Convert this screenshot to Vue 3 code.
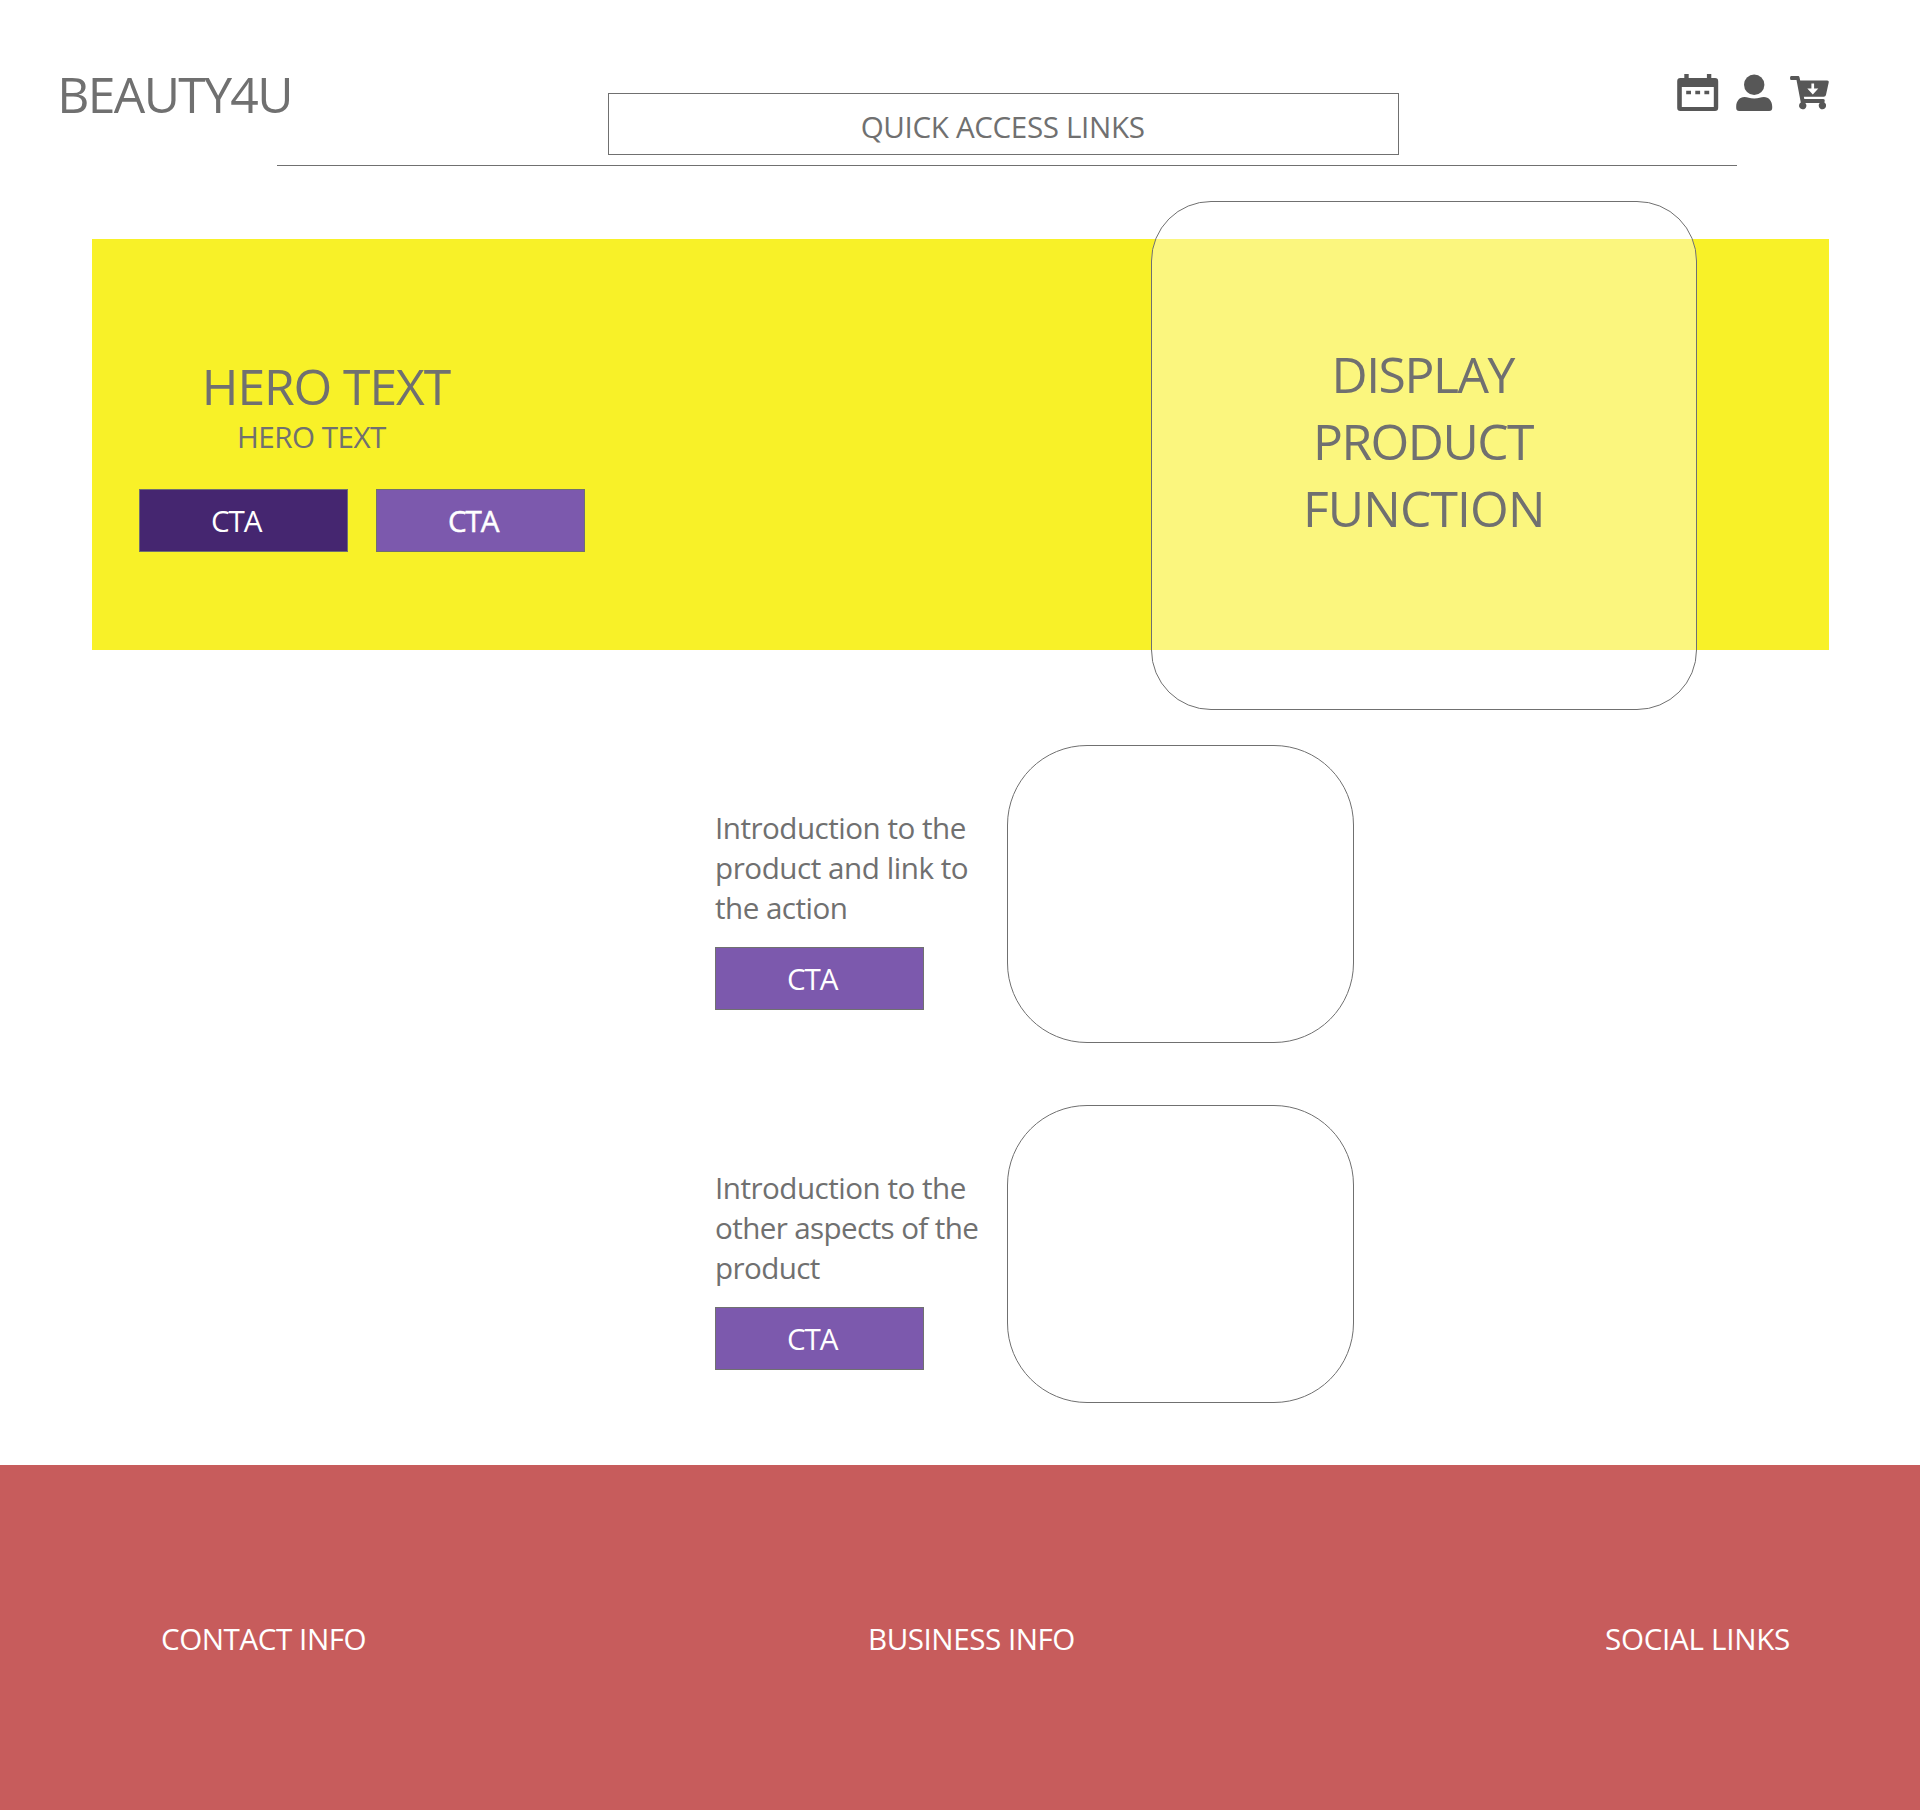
<script setup>
const features = [
  [
    { text: 'Introduction to the', tracking: -0.5 },
    { text: 'product and link to', tracking: -0.45 },
    { text: 'the action', tracking: -0.52 },
  ],
  [
    { text: 'Introduction to the', tracking: -0.5 },
    { text: 'other aspects of the', tracking: -0.61 },
    { text: 'product', tracking: -0.6 },
  ],
]
</script>

<template>
  <div class="page">
    <header class="header">
      <h1 class="brand">BEAUTY4U</h1>
      <nav class="quick">QUICK ACCESS LINKS</nav>
      <div class="icons">
        <svg width="42" height="38" viewBox="0 0 42 38" fill="#575757">
          <path d="M7.3 0h4.4v4h18.2V0h4.4v4H38a3.2 3.2 0 0 1 3.2 3.2V33.7A3.2 3.2 0 0 1 38 36.9H3.4A3.2 3.2 0 0 1 .2 33.7V7.2A3.2 3.2 0 0 1 3.4 4h3.9zM4.8 13v20h32V13z" fill-rule="evenodd" />
          <path d="M9.2 16.8H14v3.5H9.2zM18.3 16.8h4.8v3.5h-4.8zM27.4 16.8h4.8v3.5h-4.8z" />
        </svg>
        <svg class="user" width="37" height="38" viewBox="0 0 37 38" fill="#575757">
          <circle cx="18.2" cy="10.8" r="10.2" />
          <path d="M8.5 23.1c3 0 5.2 1.5 9.7 1.5s6.7-1.5 9.7-1.5c4.9 0 8.3 4.2 8.3 9.4v1.4a3 3 0 0 1-3 3H3.2a3 3 0 0 1-3-3v-1.4c0-5.2 3.4-9.4 8.3-9.4z" />
        </svg>
        <svg class="cart" width="40" height="38" viewBox="0 0 40 38" fill="#575757">
          <path d="M1.6 2h6.2c1 0 1.5.4 1.7 1.3l.7 3.3h27c1.2 0 1.8.9 1.5 2L36 20.8c-.3 1.3-1 2-2.3 2H13.8l.5 2.3h19c1 0 1.6.8 1.4 1.7l-.3 1.6a3.7 3.7 0 1 1-4.7.6H15.3a3.7 3.7 0 1 1-4.5-.5L6.5 6H1.6C.7 6 .1 5.4.1 4.7V3.3C.1 2.6.7 2 1.6 2z" />
          <path d="M21.4 9.500h2.700v5h4.200l-5.500 6-5.500-6h4.100z" fill="#fff" />
        </svg>
      </div>
    </header>
    <div class="rule"></div>

    <section class="hero">
      <h2 class="hero-title">HERO TEXT</h2>
      <p class="hero-sub">HERO TEXT</p>
      <div class="actions">
        <button class="cta dark">CTA</button>
        <button class="cta strong">CTA</button>
      </div>
      <div class="display">
        <span class="l1">DISPLAY</span>
        <span class="l2">PRODUCT</span>
        <span class="l3">FUNCTION</span>
      </div>
    </section>

    <main class="features">
      <section v-for="(lines, i) in features" :key="i" class="feature">
        <div class="copy">
          <p class="intro">
            <span v-for="line in lines" :key="line.text" :style="{ letterSpacing: line.tracking + 'px' }">{{ line.text }}</span>
          </p>
          <button class="cta">CTA</button>
        </div>
        <div class="frame"></div>
      </section>
    </main>

    <footer class="footer">
      <span class="contact">CONTACT INFO</span>
      <span class="business">BUSINESS INFO</span>
      <span class="social">SOCIAL LINKS</span>
    </footer>
  </div>
</template>

<style>
body {
  margin: 0;
  background: #fff;
}
</style>

<style scoped>
.page {
  width: 1920px;
  height: 1810px;
  overflow: hidden;
  box-sizing: border-box;
  font-family: "Open Sans", "Noto Sans", sans-serif;
  font-size: 29.6px;
  line-height: 40px;
  color: #707070;
  white-space: nowrap;
}
.page * {
  box-sizing: border-box;
}
h1,
h2,
p {
  margin: 0;
  font-weight: 400;
}
.header {
  display: grid;
  grid-template-columns: 608px 791px 1fr;
  align-items: start;
  height: 165px;
}
.brand {
  margin: 61px 0 0 57.3px;
  font-size: 49.8px;
  line-height: 67px;
  letter-spacing: -1.64px;
}
.quick {
  height: 62px;
  margin-top: 93px;
  padding: 13px 0 0 251.7px;
  border: 1px solid #707070;
  letter-spacing: -0.35px;
}
.icons {
  display: flex;
  margin: 74px 0 0 277.5px;
}
.icons svg {
  flex: none;
}
.user {
  margin-left: 17px;
}
.cart {
  margin-left: 17.5px;
}
.rule {
  width: 1460px;
  height: 1px;
  margin-left: 276.5px;
  background: #707070;
}
.hero {
  position: relative;
  width: 1737px;
  height: 411px;
  margin: 73px 0 0 92px;
  padding-top: 114px;
  background: #f8f128;
}
.hero-title {
  margin-left: 109.8px;
  font-size: 49.8px;
  line-height: 67px;
  letter-spacing: -1.1px;
}
.hero-sub {
  margin: -3px 0 0 145px;
  letter-spacing: -0.5px;
}
.actions {
  display: flex;
  gap: 28px;
  margin: 32px 0 0 47px;
}
.cta {
  display: block;
  width: 209px;
  height: 63px;
  margin: 0;
  padding: 0 0 0 71px;
  border: 1px solid #707070;
  border-radius: 0;
  background: #7c59ad;
  color: #fff;
  font: inherit;
  text-align: left;
  letter-spacing: -1.07px;
}
.cta.dark {
  background: #452670;
}
.cta.strong {
  -webkit-text-stroke: 0.5px #fff;
}
.display {
  position: absolute;
  top: -38px;
  left: 1059px;
  display: flex;
  flex-direction: column;
  align-items: flex-start;
  width: 546px;
  height: 509px;
  padding-top: 139px;
  border: 1px solid #707070;
  border-radius: 60px;
  background: rgba(255, 255, 255, 0.4);
  font-size: 49.8px;
  line-height: 67px;
}
.l1 {
  margin-left: 179.5px;
  letter-spacing: -1.48px;
}
.l2 {
  margin-left: 161px;
  letter-spacing: -1.54px;
}
.l3 {
  margin-left: 151px;
  letter-spacing: -0.85px;
}
.features {
  display: flex;
  flex-direction: column;
  gap: 62px;
  margin: 95px 0 0 715px;
}
.feature {
  display: flex;
}
.copy {
  width: 292px;
  padding-top: 63px;
}
.intro {
  display: flex;
  flex-direction: column;
  margin: 0 0 19px;
}
.frame {
  width: 347px;
  height: 298px;
  border: 1px solid #707070;
  border-radius: 80px;
}
.footer {
  display: flex;
  height: 345px;
  margin-top: 62px;
  padding-top: 154px;
  background: #c75c5c;
  color: #fff;
}
.contact {
  width: 707px;
  margin-left: 161px;
  letter-spacing: -0.44px;
}
.business {
  width: 737px;
  letter-spacing: -0.46px;
}
.social {
  letter-spacing: -0.28px;
}
</style>
